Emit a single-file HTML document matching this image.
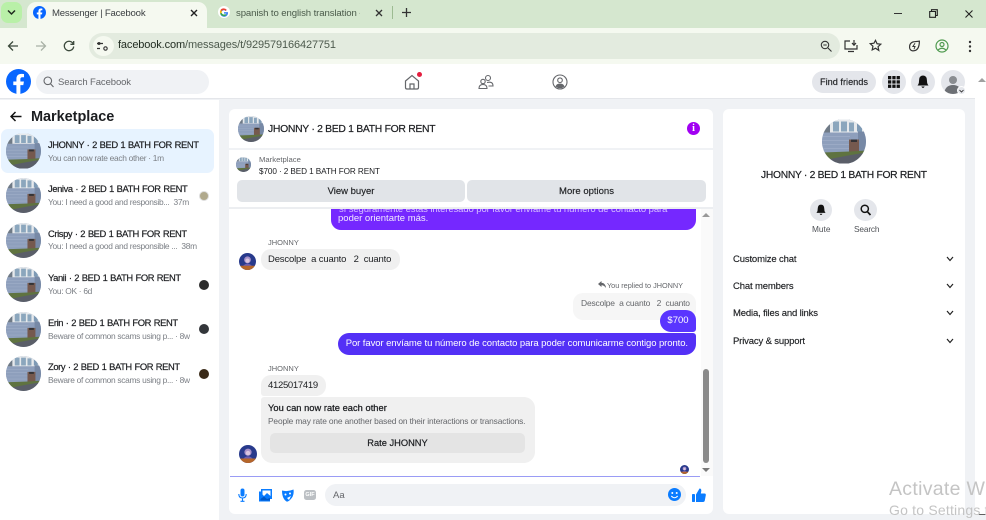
<!DOCTYPE html>
<html><head><meta charset="utf-8"><title>Messenger | Facebook</title>
<style>
*{box-sizing:border-box}
html,body{margin:0;padding:0;width:986px;height:520px;overflow:hidden;background:#fff}
body{font-family:"Liberation Sans",sans-serif;color:#1c1e21;position:relative}
#w{position:absolute;left:0;top:0;width:986px;height:520px;overflow:hidden;filter:blur(.35px)}
.a{position:absolute;white-space:nowrap}
.b{background:#f0f2f5;position:absolute}
.av{position:absolute;border-radius:50%;overflow:hidden}
.av svg{display:block;width:100%;height:100%}
.t{position:absolute;left:48px;font-size:9.400px;letter-spacing:-.4px;word-spacing:.5px;color:#1c1e21;white-space:nowrap;font-weight:400;-webkit-text-stroke:.2px #1c1e21}
.s{position:absolute;left:48px;font-size:8.400px;letter-spacing:-.3px;color:#7b7f85;white-space:nowrap}
.rc{position:absolute;width:10px;height:10px;border-radius:50%}
.row{position:absolute;left:733px;font-size:9.500px;letter-spacing:-.15px;color:#1c1e21;white-space:nowrap;-webkit-text-stroke:.15px #1c1e21}
</style></head><body>
<svg width="0" height="0" style="position:absolute"><defs>
<symbol id="h" viewBox="0 0 44 44">
<rect width="44" height="44" fill="#8496b3"/>
<rect width="44" height="13" fill="#e6e9ec"/>
<path d="M0 0H8V13H0Z" fill="#6f7a86"/>
<path d="M11 2h6v10h-6zM19 2h6v10h-6zM27 3h5v9h-5z" fill="#8ba6bd"/>
<path d="M35 4h5v8h-5z" fill="#7e9ab5"/>
<path d="M0 13H36V33H0Z" fill="#8e9fbc"/>
<path d="M0 17H28M0 21H28M0 25H28M0 29H28" stroke="#a0afc8" stroke-width=".7"/>
<rect x="36" y="12" width="8" height="20" fill="#7789a6"/>
<rect x="27" y="20" width="10" height="13" fill="#75594e"/>
<rect x="29" y="20" width="6" height="2.500" fill="#333235"/>
<path d="M0 33L28 32L44 31V34L26 37L0 41Z" fill="#5f7340"/>
<path d="M0 41L26 36L44 33V44H0Z" fill="#5a5e68"/>
</symbol>
<symbol id="p" viewBox="0 0 20 20">
<rect width="20" height="20" fill="#283a8c"/>
<circle cx="10" cy="8" r="4" fill="#a58fc8"/>
<path d="M4 16Q10 9 16 16V20H4Z" fill="#6b5db0"/>
<rect y="15" width="20" height="5" fill="#b5662a"/>
<circle cx="10" cy="9" r="2.500" fill="#d9c5e0"/>
</symbol>
</defs></svg>
<div id="w">
<!-- browser chrome -->
<div class="a" style="left:0;top:0;width:986px;height:28px;background:#d5e7cf"></div>
<div class="a" style="left:1px;top:2px;width:21px;height:21px;background:#b9f0a8;border-radius:7px"></div>
<svg class="a" style="left:7px;top:9px" width="9" height="7" viewBox="0 0 9 7"><path d="M1 1.500L4.500 5L8 1.500" fill="none" stroke="#1f2a1f" stroke-width="1.500"/></svg>
<div class="a" style="left:27px;top:2px;width:180px;height:26px;background:#f5f9f0;border-radius:9px 9px 0 0"></div>
<svg class="a" style="left:33px;top:6px" width="13" height="13" viewBox="0 0 24 24"><circle cx="12" cy="12" r="12" fill="#0866ff"/><path d="M16.600 15.500l.6-3.500h-3.400V9.800c0-1 .5-1.900 2-1.900h1.500V4.900s-1.400-.2-2.700-.2c-2.800 0-4.600 1.700-4.600 4.700V12H7v3.500h3v8.400a12 12 0 0 0 3.800 0v-8.400z" fill="#fff"/></svg>
<div class="a" style="left:52px;top:8px;font-size:9.600px;letter-spacing:-.2px;color:#3c4043">Messenger | Facebook</div>
<svg class="a" style="left:190px;top:9px" width="8" height="8" viewBox="0 0 8 8"><path d="M1 1L7 7M7 1L1 7" stroke="#222" stroke-width="1.400"/></svg>
<svg class="a" style="left:218px;top:6px" width="12" height="12" viewBox="0 0 24 24"><circle cx="12" cy="12" r="12" fill="#fff"/><path d="M20 12.200h-8v3h4.600a5 5 0 1 1-1.300-5.300l2.200-2.200A8 8 0 1 0 20 12.200z" fill="#4285f4"/><path d="M5 8l2.500 2A5 5 0 0 1 15.300 9.900l2.200-2.200A8 8 0 0 0 5 8z" fill="#ea4335"/><path d="M4.600 15.500l2.600-2a5 5 0 0 0 .1-3.500L5 8a8 8 0 0 0-.4 7.500z" fill="#fbbc05"/><path d="M4.600 15.500A8 8 0 0 0 17 18.300l-2.400-2a5 5 0 0 1-7.400-2.800z" fill="#34a853"/></svg>
<div class="a" style="left:236px;top:8px;font-size:9.600px;letter-spacing:-.1px;color:#4a5a4a;width:124px;overflow:hidden">spanish to english translation -</div>
<svg class="a" style="left:375px;top:9px" width="8" height="8" viewBox="0 0 8 8"><path d="M1 1L7 7M7 1L1 7" stroke="#333" stroke-width="1.300"/></svg>
<div class="a" style="left:392px;top:6px;width:1px;height:13px;background:#9dbb92"></div>
<svg class="a" style="left:402px;top:8px" width="9" height="9" viewBox="0 0 9 9"><path d="M4.500 0V9M0 4.500H9" stroke="#333" stroke-width="1.300"/></svg>
<div class="a" style="left:894px;top:13px;width:8px;height:1.300px;background:#333"></div>
<svg class="a" style="left:929px;top:9px" width="9" height="9" viewBox="0 0 9 9"><path d="M.7 2.500h5.800v5.800H.7zM2.500 2.500V.7h5.800v5.800H6.500" fill="none" stroke="#222" stroke-width="1.100"/></svg>
<svg class="a" style="left:965px;top:10px" width="8" height="8" viewBox="0 0 8 8"><path d="M.5.500L7.500 7.500M7.500.500L.5 7.500" stroke="#222" stroke-width="1.100"/></svg>
<div class="a" style="left:0;top:28px;width:986px;height:36px;background:#f5f9f0"></div>
<svg class="a" style="left:7px;top:40px" width="12" height="12" viewBox="0 0 12 12"><path d="M11 6H2M6 1.500L1.500 6L6 10.500" fill="none" stroke="#3c4a3c" stroke-width="1.300"/></svg>
<svg class="a" style="left:35px;top:40px" width="12" height="12" viewBox="0 0 12 12"><path d="M1 6H10M6 1.500L10.500 6L6 10.500" fill="none" stroke="#a9b2a6" stroke-width="1.300"/></svg>
<svg class="a" style="left:63px;top:40px" width="12" height="12" viewBox="0 0 12 12"><path d="M10.300 4A4.700 4.700 0 1 0 10.700 6.500M10.700 1V4.300H7.400" fill="none" stroke="#3c4a3c" stroke-width="1.300"/></svg>
<div class="a" style="left:89px;top:33px;width:751px;height:26px;background:#e3ebdf;border-radius:13px"></div>
<div class="a" style="left:93px;top:36px;width:21px;height:20px;background:#f5f9f0;border-radius:50%"></div>
<svg class="a" style="left:97px;top:41px" width="12" height="10" viewBox="0 0 12 10"><path d="M0 2.500H6M0 7.500H3" stroke="#333" stroke-width="1.200"/><circle cx="8.500" cy="7.500" r="1.700" fill="none" stroke="#333" stroke-width="1.100"/><circle cx="2" cy="2.500" r="1.500" fill="#333"/></svg>
<div class="a" style="left:118px;top:39px;font-size:11px;letter-spacing:-.12px;color:#4d5a4d"><span style="color:#1f2a1f">facebook.com</span>/messages/t/929579166427751</div>
<svg class="a" style="left:820px;top:40px" width="12" height="12" viewBox="0 0 12 12"><circle cx="5" cy="5" r="3.700" fill="none" stroke="#333" stroke-width="1.100"/><path d="M8 8L11.500 11.500M3.300 5H6.700" stroke="#333" stroke-width="1.100"/></svg>
<svg class="a" style="left:844px;top:39px" width="14" height="14" viewBox="0 0 14 14"><path d="M6 2H1V10H13V6M4 12.500H10" fill="none" stroke="#333" stroke-width="1.200"/><path d="M10 1V6M8 4L10 6.200L12 4" fill="none" stroke="#333" stroke-width="1.200"/></svg>
<svg class="a" style="left:869px;top:39px" width="13" height="13" viewBox="0 0 24 24"><path d="M12 2.500l2.900 6.300 6.900.8-5.100 4.700 1.400 6.800L12 17l-6.100 3.100 1.400-6.800-5.100-4.700 6.900-.8z" fill="none" stroke="#333" stroke-width="2.200"/></svg>
<svg class="a" style="left:908px;top:39px" width="13" height="14" viewBox="0 0 24 24"><path d="M21 3Q21 21 9 21A6.500 6.500 0 0 1 3 13A9 9 0 0 1 12 4Z" fill="none" stroke="#333" stroke-width="2.200"/><path d="M13 7L9 13H13L11 18" fill="none" stroke="#333" stroke-width="1.800"/></svg>
<svg class="a" style="left:935px;top:39px" width="14" height="14" viewBox="0 0 14 14"><circle cx="7" cy="7" r="6" fill="none" stroke="#4f9a4f" stroke-width="1.200"/><circle cx="7" cy="5.500" r="2" fill="none" stroke="#4f9a4f" stroke-width="1.200"/><path d="M3 11Q7 7.500 11 11" fill="none" stroke="#4f9a4f" stroke-width="1.200"/></svg>
<svg class="a" style="left:968px;top:40px" width="4" height="13" viewBox="0 0 4 13"><circle cx="2" cy="2" r="1.200" fill="#333"/><circle cx="2" cy="6.500" r="1.200" fill="#333"/><circle cx="2" cy="11" r="1.200" fill="#333"/></svg>

<!-- page bg -->
<div class="b" style="left:0;top:64px;width:975px;height:456px"></div>
<!-- FB nav -->
<div class="a" style="left:0;top:64px;width:975px;height:35px;background:#fff;border-bottom:1px solid #e4e6ea"></div>
<svg class="a" style="left:6px;top:69px" width="25" height="25" viewBox="0 0 24 24"><circle cx="12" cy="12" r="12" fill="#0866ff"/><path d="M16.600 15.500l.6-3.500h-3.400V9.800c0-1 .5-1.900 2-1.900h1.500V4.900s-1.400-.2-2.700-.2c-2.800 0-4.600 1.700-4.600 4.700V12H7v3.500h3v8.400a12 12 0 0 0 3.800 0v-8.400z" fill="#fff"/></svg>
<div class="a" style="left:36px;top:70px;width:173px;height:24px;border-radius:12px;background:#f0f2f5"></div>
<svg class="a" style="left:43px;top:76px" width="11" height="12" viewBox="0 0 11 12"><circle cx="4.800" cy="4.800" r="3.800" fill="none" stroke="#65676b" stroke-width="1.100"/><path d="M7.500 7.800L10.500 11" stroke="#65676b" stroke-width="1.100"/></svg>
<div class="a" style="left:58px;top:77px;font-size:9.500px;letter-spacing:-.1px;color:#65676b">Search Facebook</div>
<svg class="a" style="left:404px;top:74px" width="16" height="16" viewBox="0 0 16 16"><path d="M1.500 7L8 1.500L14.500 7V13.500Q14.500 15 13 15H3Q1.500 15 1.500 13.500Z" fill="none" stroke="#65676b" stroke-width="1.200"/><path d="M6 15V10H10V15" fill="none" stroke="#65676b" stroke-width="1.200"/></svg>
<div class="a" style="left:417px;top:72px;width:5px;height:5px;border-radius:50%;background:#e41e3f"></div>
<svg class="a" style="left:478px;top:74px" width="16" height="16" viewBox="0 0 16 16"><circle cx="10" cy="4" r="2.500" fill="none" stroke="#65676b" stroke-width="1.100"/><circle cx="5" cy="7.500" r="2.200" fill="none" stroke="#65676b" stroke-width="1.100"/><path d="M1 14.500Q1 10.500 5 10.500Q9 10.500 9 14.500ZM9 8.500Q15 7 15 12H10.500" fill="none" stroke="#65676b" stroke-width="1.100"/></svg>
<svg class="a" style="left:552px;top:74px" width="16" height="16" viewBox="0 0 16 16"><circle cx="8" cy="8" r="7" fill="none" stroke="#65676b" stroke-width="1.100"/><circle cx="8" cy="6.200" r="2.300" fill="none" stroke="#65676b" stroke-width="1.100"/><path d="M3.500 12.500Q4.500 9.500 8 9.500Q11.500 9.500 12.500 12.500Q8 16 3.500 12.500Z" fill="#65676b"/></svg>
<div class="a" style="left:812px;top:71px;width:64px;height:22px;border-radius:11px;background:#e4e6eb;font-size:9.200px;line-height:23px;text-align:center;-webkit-text-stroke:.15px #1c1e21">Find friends</div>
<div class="a" style="left:882px;top:70px;width:24px;height:24px;border-radius:50%;background:#e4e6eb"></div>
<svg class="a" style="left:888px;top:76px" width="12" height="12" viewBox="0 0 12 12" fill="#111"><rect width="3.300" height="3.300"/><rect x="4.300" width="3.300" height="3.300"/><rect x="8.600" width="3.300" height="3.300"/><rect y="4.300" width="3.300" height="3.300"/><rect x="4.300" y="4.300" width="3.300" height="3.300"/><rect x="8.600" y="4.300" width="3.300" height="3.300"/><rect y="8.600" width="3.300" height="3.300"/><rect x="4.300" y="8.600" width="3.300" height="3.300"/><rect x="8.600" y="8.600" width="3.300" height="3.300"/></svg>
<div class="a" style="left:911px;top:70px;width:24px;height:24px;border-radius:50%;background:#e4e6eb"></div>
<svg class="a" style="left:917px;top:75px" width="12" height="14" viewBox="0 0 12 14"><path d="M6 .5Q10 .5 10 6Q10 9 11.500 10.500H.5Q2 9 2 6Q2 .5 6 .5Z" fill="#111"/><path d="M4.300 11.500Q6 14.500 7.700 11.500Z" fill="#111"/></svg>
<div class="a" style="left:941px;top:70px;width:24px;height:24px;border-radius:50%;background:#e4e6eb;overflow:hidden"><svg width="24" height="24" viewBox="0 0 24 24"><circle cx="12" cy="10" r="4" fill="#8a8d91"/><path d="M3 24Q4 15 12 15Q20 15 21 24Z" fill="#6d7075"/></svg></div>
<div class="a" style="left:957px;top:86px;width:9px;height:9px;border-radius:50%;background:#e4e6eb;border:1px solid #fff"></div>
<svg class="a" style="left:959px;top:89px" width="5" height="4" viewBox="0 0 5 4"><path d="M.5 1L2.500 3L4.500 1" fill="none" stroke="#222" stroke-width=".8"/></svg>

<!-- Outer scrollbar -->
<div class="a" style="left:975px;top:64px;width:11px;height:456px;background:#fff"></div>
<div class="a" style="left:978px;top:78px;border:4px solid transparent;border-top:0;border-bottom:4px solid #a0a0a0"></div>
<div class="a" style="left:978px;top:514px;border:4px solid transparent;border-bottom:0;border-top:4px solid #606060"></div>

<!-- left sidebar -->
<div class="a" style="left:0;top:100px;width:219px;height:420px;background:#fff"></div>
<svg class="a" style="left:10px;top:111px" width="12" height="11" viewBox="0 0 12 11"><path d="M11.500 5.500H1.500M5.500 1L1 5.500L5.500 10" fill="none" stroke="#111" stroke-width="1.500"/></svg>
<div class="a" style="left:31px;top:109px;font-size:14.500px;font-weight:700;letter-spacing:-.05px;color:#1c1e21">Marketplace</div>
<div class="a" style="left:1px;top:129px;width:213px;height:44px;background:#e7f3ff;border-radius:7px"></div>

<div class="av" style="left:6px;top:133px;width:35px;height:36px"><svg><use href="#h"/></svg></div>
<div class="t" style="top:139px">JHONNY · 2 BED 1 BATH FOR RENT</div>
<div class="s" style="top:153px">You can now rate each other · 1m</div>

<div class="av" style="left:6px;top:178px;width:35px;height:35px"><svg><use href="#h"/></svg></div>
<div class="t" style="top:183px">Jeniva · 2 BED 1 BATH FOR RENT</div>
<div class="s" style="top:197px">You: I need a good and responsib...&nbsp; 37m</div>
<div class="rc" style="left:199px;top:191px;background:#b0a98c;border:1px solid #ddd"></div>

<div class="av" style="left:6px;top:223px;width:35px;height:35px"><svg><use href="#h"/></svg></div>
<div class="t" style="top:228px">Crispy · 2 BED 1 BATH FOR RENT</div>
<div class="s" style="top:241px">You: I need a good and responsible ...&nbsp; 38m</div>

<div class="av" style="left:6px;top:267px;width:35px;height:35px"><svg><use href="#h"/></svg></div>
<div class="t" style="top:272px">Yanii · 2 BED 1 BATH FOR RENT</div>
<div class="s" style="top:286px">You: OK · 6d</div>
<div class="rc" style="left:199px;top:280px;background:#2c2c2c"></div>

<div class="av" style="left:6px;top:312px;width:35px;height:35px"><svg><use href="#h"/></svg></div>
<div class="t" style="top:317px">Erin · 2 BED 1 BATH FOR RENT</div>
<div class="s" style="top:331px">Beware of common scams using p... · 8w</div>
<div class="rc" style="left:199px;top:324px;background:#33363a"></div>

<div class="av" style="left:6px;top:356px;width:35px;height:35px"><svg><use href="#h"/></svg></div>
<div class="t" style="top:361px">Zory · 2 BED 1 BATH FOR RENT</div>
<div class="s" style="top:375px">Beware of common scams using p... · 8w</div>
<div class="rc" style="left:199px;top:369px;background:#3a2a18"></div>

<!-- chat card -->
<div class="a" style="left:229px;top:109px;width:484px;height:405px;background:#fff;border-radius:6px"></div>
<div class="av" style="left:238px;top:116px;width:26px;height:26px"><svg><use href="#h"/></svg></div>
<div class="a" style="left:268px;top:124px;font-size:10.400px;letter-spacing:-.3px;color:#1c1e21;-webkit-text-stroke:.2px #1c1e21">JHONNY · 2 BED 1 BATH FOR RENT</div>
<div class="a" style="left:687px;top:122px;width:13px;height:13px;border-radius:50%;background:#a100f2;color:#fff;font-size:10px;font-weight:700;line-height:13px;text-align:center;font-family:'Liberation Serif',serif">i</div>
<div class="a" style="left:229px;top:148px;width:484px;height:2px;background:#f0f2f5"></div>
<div class="av" style="left:236px;top:157px;width:15px;height:15px"><svg><use href="#h"/></svg></div>
<div class="a" style="left:259px;top:155px;font-size:7.700px;color:#65676b">Marketplace</div>
<div class="a" style="left:259px;top:167px;font-size:8.200px;letter-spacing:-.1px;color:#1c1e21">$700 · 2 BED 1 BATH FOR RENT</div>
<div class="a" style="left:237px;top:180px;width:228px;height:22px;background:#e1e4e8;border-radius:5px;text-align:center;font-size:9.500px;line-height:24px;-webkit-text-stroke:.15px #1c1e21">View buyer</div>
<div class="a" style="left:467px;top:180px;width:239px;height:22px;background:#e1e4e8;border-radius:5px;text-align:center;font-size:9.500px;line-height:24px;-webkit-text-stroke:.15px #1c1e21">More options</div>

<!-- messages -->
<div class="a" style="left:331px;top:209px;width:365px;height:21px;background:#7528ff;border-radius:0 0 10px 10px;overflow:hidden;color:#fff;font-size:9.500px"><div style="position:absolute;left:8px;top:-5px;opacity:.7;letter-spacing:-.1px">sí seguramente estás interesado por favor envíame tu número de contacto para</div><div style="position:absolute;left:7px;top:4px;color:#f2eaff">poder orientarte más.</div></div>
<div class="a" style="left:229px;top:207px;width:484px;height:2px;background:#eceef1"></div>
<div class="a" style="left:268px;top:238px;font-size:7.500px;color:#65676b">JHONNY</div>
<div class="av" style="left:239px;top:253px;width:17px;height:17px"><svg><use href="#p"/></svg></div>
<div class="a" style="left:261px;top:249px;width:139px;height:21px;background:#f0f0f0;border-radius:10px;font-size:9.500px;letter-spacing:-.17px;line-height:22px;padding-left:7px;white-space:pre;color:#1c1e21">Descolpe  a cuanto   2  cuanto</div>

<svg class="a" style="left:598px;top:281px" width="8" height="7" viewBox="0 0 8 7"><path d="M3.500 0L0 3L3.500 6V4.300Q6 4.300 8 7Q7.500 2 3.500 1.800Z" fill="#65676b"/></svg>
<div class="a" style="left:607px;top:281px;font-size:7.300px;letter-spacing:-.02px;color:#65676b">You replied to JHONNY</div>
<div class="a" style="left:573px;top:293px;width:123px;height:27px;background:#f6f6f6;border-radius:10px;font-size:8.500px;letter-spacing:-.2px;line-height:20px;padding-left:8px;white-space:pre;color:#65676b">Descolpe  a cuanto   2  cuanto</div>
<div class="a" style="left:660px;top:310px;width:36px;height:22px;background:#5a35ff;border-radius:11px 10px 3px 11px;color:#fff;font-size:9.500px;line-height:22px;text-align:center">$700</div>
<div class="a" style="left:338px;top:333px;width:358px;height:22px;background:#5330f6;border-radius:11px 3px 11px 11px;color:#fff;font-size:9.500px;line-height:21px;text-align:right;padding-right:8px;letter-spacing:-.08px">Por favor envíame tu número de contacto para poder comunicarme contigo pronto.</div>

<div class="a" style="left:268px;top:364px;font-size:7.500px;color:#65676b">JHONNY</div>
<div class="a" style="left:261px;top:375px;width:65px;height:21px;background:#f0f0f0;border-radius:10px 10px 10px 3px;font-size:9.500px;line-height:21px;padding-left:7px;letter-spacing:-.3px">4125017419</div>
<div class="a" style="left:261px;top:397px;width:274px;height:66px;background:#f0f0f0;border-radius:3px 11px 11px 11px"></div>
<div class="a" style="left:268px;top:403px;font-size:9.300px;letter-spacing:.03px;-webkit-text-stroke:.25px #1c1e21">You can now rate each other</div>
<div class="a" style="left:268px;top:416px;font-size:8.400px;letter-spacing:-.15px;color:#65676b">People may rate one another based on their interactions or transactions.</div>
<div class="a" style="left:270px;top:433px;width:255px;height:20px;background:#e4e4e4;border-radius:5px;font-size:9.300px;line-height:20px;text-align:center;-webkit-text-stroke:.2px #1c1e21">Rate JHONNY</div>
<div class="av" style="left:239px;top:445px;width:18px;height:18px"><svg><use href="#p"/></svg></div>
<div class="av" style="left:680px;top:465px;width:9px;height:9px"><svg><use href="#p"/></svg></div>
<!-- inner scrollbar -->
<div class="a" style="left:701px;top:209px;width:12px;height:267px;background:#fafafa"></div>
<div class="a" style="left:702px;top:213px;border:4px solid transparent;border-top:0;border-bottom:4px solid #999"></div>
<div class="a" style="left:703px;top:369px;width:6px;height:94px;background:#8a8a8a;border-radius:3px"></div>
<div class="a" style="left:702px;top:468px;border:4px solid transparent;border-bottom:0;border-top:4px solid #777"></div>
<div class="a" style="left:230px;top:476px;width:470px;height:1px;background:#9a9cf5"></div>

<!-- composer -->
<svg class="a" style="left:238px;top:488px" width="9" height="14" viewBox="0 0 9 14" fill="none"><rect x="2.500" y="0.500" width="4" height="8" rx="2" fill="#0a7cff"/><path d="M.8 6Q.8 10 4.500 10Q8.200 10 8.200 6M4.500 10V13M2.500 13.300H6.500" stroke="#0a7cff" stroke-width="1.100"/></svg>
<svg class="a" style="left:259px;top:489px" width="13" height="13" viewBox="0 0 13 13"><path d="M2 0H13V10H11V12.500H0V2.500H2Z" fill="#0a7cff"/><path d="M3.500 1.500H11.500V7L8 4L5 7L3.500 5.500Z" fill="#fff"/><path d="M1.500 10L5 7.500L8 10L11 9V11.500H1.500Z" fill="#0059c9"/></svg>
<svg class="a" style="left:281px;top:489px" width="13" height="13" viewBox="0 0 13 13"><path d="M1 1.500Q6.500 3 12.500 .5Q13.500 7 9 11Q7.500 12.500 6 12.800Q1 10 1 1.500Z" fill="#0a7cff"/><circle cx="4.500" cy="5.500" r="1" fill="#fff"/><circle cx="9" cy="4.500" r="1" fill="#fff"/><path d="M6 9L10 7L8 11" fill="#fff"/></svg>
<div class="a" style="left:304px;top:490px;width:12px;height:10px;border-radius:2.500px;background:#bcc0c4;color:#fff;font-size:5.500px;font-weight:700;line-height:10px;text-align:center">GIF</div>
<div class="a" style="left:325px;top:484px;width:361px;height:22px;border-radius:11px;background:#f0f2f5"></div>
<div class="a" style="left:333px;top:490px;font-size:9.500px;color:#65676b">Aa</div>
<svg class="a" style="left:668px;top:488px" width="13" height="13" viewBox="0 0 13 13"><circle cx="6.500" cy="6.500" r="6.500" fill="#0a7cff"/><circle cx="4.300" cy="5" r="1" fill="#fff"/><circle cx="8.700" cy="5" r="1" fill="#fff"/><path d="M3.300 8Q6.500 11.500 9.700 8" fill="none" stroke="#fff" stroke-width="1"/></svg>
<svg class="a" style="left:692px;top:488px" width="14" height="14" viewBox="0 0 14 14"><rect x="0" y="6" width="3" height="8" rx=".8" fill="#0a7cff"/><path d="M4 6.500L7.500.5Q9.500.5 9.300 3L8.800 5.500H12.500Q14 5.500 13.800 7.200L12.800 12.500Q12.500 14 11 14H4Z" fill="#0a7cff"/></svg>

<!-- right card -->
<div class="a" style="left:723px;top:109px;width:242px;height:405px;background:#fff;border-radius:6px"></div>
<div class="av" style="left:822px;top:119px;width:44px;height:45px"><svg><use href="#h"/></svg></div>
<div class="a" style="left:761px;top:170px;font-size:10.300px;letter-spacing:-.3px;-webkit-text-stroke:.2px #1c1e21">JHONNY · 2 BED 1 BATH FOR RENT</div>
<div class="a" style="left:810px;top:199px;width:22px;height:22px;border-radius:50%;background:#e4e6eb"></div>
<svg class="a" style="left:816px;top:204px" width="10" height="12" viewBox="0 0 12 14"><path d="M6 .5Q10 .5 10 6Q10 9 11.500 10.500H.5Q2 9 2 6Q2 .5 6 .5Z" fill="#111"/><path d="M4.300 11.500Q6 14.500 7.700 11.500Z" fill="#111"/></svg>
<div class="a" style="left:854px;top:199px;width:23px;height:22px;border-radius:50%;background:#e4e6eb"></div>
<svg class="a" style="left:860px;top:204px" width="11" height="12" viewBox="0 0 11 12"><circle cx="4.800" cy="4.800" r="3.600" fill="none" stroke="#111" stroke-width="1.500"/><path d="M7.500 7.800L10.500 11" stroke="#111" stroke-width="1.700"/></svg>
<div class="a" style="left:812px;top:224px;font-size:8.300px;color:#4f5257">Mute</div>
<div class="a" style="left:854px;top:224px;font-size:8.300px;letter-spacing:-.15px;color:#4f5257">Search</div>
<div class="row" style="top:254px">Customize chat</div>
<div class="row" style="top:281px">Chat members</div>
<div class="row" style="top:308px">Media, files and links</div>
<div class="row" style="top:336px">Privacy &amp; support</div>
<svg class="a" style="left:946px;top:256px" width="8" height="6" viewBox="0 0 8 6"><path d="M1 1L4 4.500L7 1" fill="none" stroke="#222" stroke-width="1.200"/></svg>
<svg class="a" style="left:946px;top:283px" width="8" height="6" viewBox="0 0 8 6"><path d="M1 1L4 4.500L7 1" fill="none" stroke="#222" stroke-width="1.200"/></svg>
<svg class="a" style="left:946px;top:310px" width="8" height="6" viewBox="0 0 8 6"><path d="M1 1L4 4.500L7 1" fill="none" stroke="#222" stroke-width="1.200"/></svg>
<svg class="a" style="left:946px;top:338px" width="8" height="6" viewBox="0 0 8 6"><path d="M1 1L4 4.500L7 1" fill="none" stroke="#222" stroke-width="1.200"/></svg>

<!-- watermark -->
<div class="a" style="left:219px;top:515px;width:767px;height:5px;background:#f0f2f5"></div>
<div class="a" style="left:889px;top:478px;font-size:19.500px;color:#c4c4c4;letter-spacing:.3px">Activate Windows</div>
<div class="a" style="left:889px;top:502px;font-size:14px;color:#c4c4c4;letter-spacing:.2px">Go to Settings to activate Windows.</div>
</div>
</body></html>
